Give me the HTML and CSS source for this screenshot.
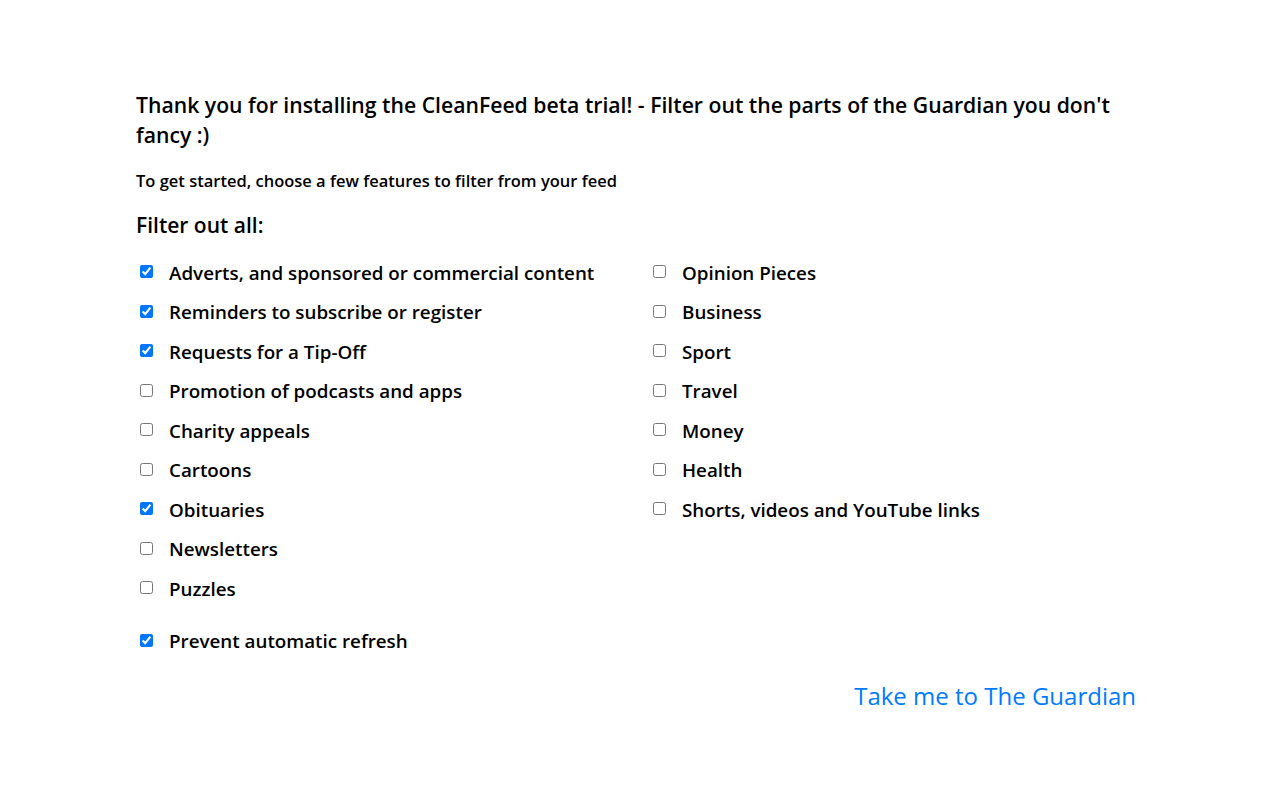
FILE: index.html
```html
<!DOCTYPE html>
<html lang="en">
<head>
<meta charset="utf-8">
<title>CleanFeed</title>
<link rel="stylesheet" href="styles.css">
</head>
<body>
<main class="page">
  <h1 class="title">Thank you for installing the CleanFeed beta trial! - Filter out the parts of the Guardian you don't fancy :)</h1>
  <p class="intro">To get started, choose a few features to filter from your feed</p>
  <h2 class="section">Filter out all:</h2>
  <div class="options">
    <div class="col">
      <label class="opt"><input type="checkbox" checked><span>Adverts, and sponsored or commercial content</span></label>
      <label class="opt"><input type="checkbox" checked><span>Reminders to subscribe or register</span></label>
      <label class="opt"><input type="checkbox" checked><span>Requests for a Tip-Off</span></label>
      <label class="opt"><input type="checkbox"><span>Promotion of podcasts and apps</span></label>
      <label class="opt"><input type="checkbox"><span>Charity appeals</span></label>
      <label class="opt"><input type="checkbox"><span>Cartoons</span></label>
      <label class="opt"><input type="checkbox" checked><span>Obituaries</span></label>
      <label class="opt"><input type="checkbox"><span>Newsletters</span></label>
      <label class="opt"><input type="checkbox"><span>Puzzles</span></label>
    </div>
    <div class="col">
      <label class="opt"><input type="checkbox"><span>Opinion Pieces</span></label>
      <label class="opt"><input type="checkbox"><span>Business</span></label>
      <label class="opt"><input type="checkbox"><span>Sport</span></label>
      <label class="opt"><input type="checkbox"><span>Travel</span></label>
      <label class="opt"><input type="checkbox"><span>Money</span></label>
      <label class="opt"><input type="checkbox"><span>Health</span></label>
      <label class="opt"><input type="checkbox"><span>Shorts, videos and YouTube links</span></label>
    </div>
  </div>
  <label class="opt refresh"><input type="checkbox" checked><span>Prevent automatic refresh</span></label>
  <div class="actions"><a class="go" href="#">Take me to The Guardian</a></div>
</main>
</body>
</html>
```
FILE: styles.css
```css
html, body {
  margin: 0;
  padding: 0;
  background: #fff;
}
body {
  font-family: "Open Sans", "Noto Sans", sans-serif;
  color: #000;
}
.page {
  width: 1000px;
  margin: 0 0 0 136px;
  padding-top: 90px;
}
.title {
  margin: 0;
  font-size: 21.2px;
  line-height: 30px;
  font-weight: 600;
}
.intro {
  margin: 19px 0 0;
  font-size: 16.5px;
  line-height: 24px;
  font-weight: 600;
}
.section {
  margin: 17px 0 0;
  font-size: 21px;
  line-height: 30px;
  font-weight: 600;
}
.options {
  display: grid;
  grid-template-columns: 513px 1fr;
  margin-top: 13px;
}
.col {
  display: flex;
  flex-direction: column;
}
.opt {
  display: flex;
  align-items: center;
  height: 39.5px;
  font-size: 18.8px;
  font-weight: 600;
}
.opt input {
  margin: 0 16px 0 4px;
  width: 13px;
  height: 13px;
  position: relative;
  top: -1px;
}
.refresh {
  margin-top: 13px;
}
.actions {
  display: flex;
  justify-content: flex-end;
  margin-top: 17px;
}
.go {
  color: #007bff;
  text-decoration: none;
  font-size: 24px;
  line-height: 36px;
  font-weight: 400;
}
```
